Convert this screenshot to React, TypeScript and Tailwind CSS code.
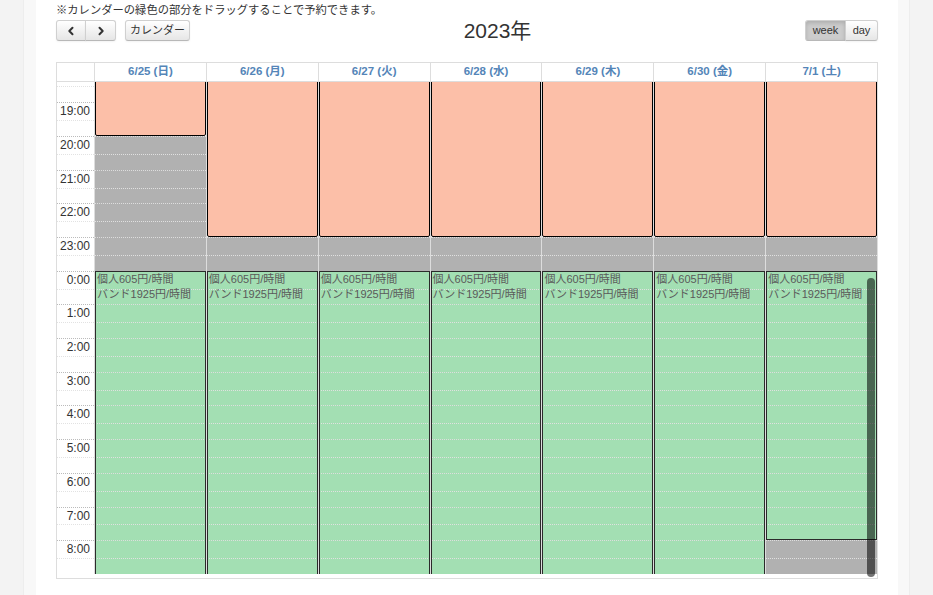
import React from "react";

const H = 33.7;
const HOURS = [18, 19, 20, 21, 22, 23, 0, 1, 2, 3, 4, 5, 6, 7, 8];
const DAYS = ["6/25 (日)", "6/26 (月)", "6/27 (火)", "6/28 (水)", "6/29 (木)", "6/30 (金)", "7/1 (土)"];

type Col = { peachEnd: number; gray: [number, number][]; greenEnd: number; greenBottom: boolean };

const COLS: Col[] = DAYS.map((_, i) => {
  if (i === 0) return { peachEnd: 2, gray: [[2, 6]], greenEnd: 16, greenBottom: false };
  if (i === 6) return { peachEnd: 5, gray: [[5, 6], [14, 16]], greenEnd: 14, greenBottom: true };
  return { peachEnd: 5, gray: [[5, 6]], greenEnd: 16, greenBottom: false };
});

const FONT = { fontFamily: '"Liberation Sans", Arial, "Noto Sans CJK JP", sans-serif' };

function Slats({ labels }: { labels?: boolean }) {
  return (
    <div className="relative z-10 flex flex-col">
      {HOURS.map((h, i) => (
        <div
          key={h}
          className={
            labels
              ? "flex h-[33.7px] flex-col border-t border-dotted border-[#bbb]"
              : "flex h-[33.7px] flex-col border-t border-dotted border-[#ddd]"
          }
        >
          <div className="h-[16.85px] pr-[4px] pt-[1px] text-right text-[12px] leading-[15px] text-[#333]">
            {labels && i > 0 ? `${h}:00` : ""}
          </div>
          <div
            className={
              labels
                ? "flex-1 border-t border-dotted border-[#e2e2e2]"
                : "flex-1 border-t border-dotted border-[#e0e0e0]"
            }
          />
        </div>
      ))}
    </div>
  );
}

function DayCol({ col }: { col: Col }) {
  const greenTop = 6 * H;
  const greenH = (col.greenEnd - 6) * H;
  return (
    <div className="relative flex-1 basis-0 border-l border-[#ddd]">
      {col.gray.map(([a, b], k) => (
        <div
          key={k}
          className="absolute inset-x-0 z-0 bg-[#b1b1b1]"
          style={{ top: a * H, height: (b - a) * H }}
        />
      ))}
      <div className="absolute inset-x-0 z-0 bg-[#a3dfb3]" style={{ top: greenTop, height: greenH }} />
      <Slats />
      <div
        className={
          col.greenBottom
            ? "absolute inset-x-0 z-20 border border-[#2b2b2b] pl-[1px] text-[11px] leading-[15px] text-[#5a5a5a]"
            : "absolute inset-x-0 z-20 border border-b-0 border-[#2b2b2b] pl-[1px] text-[11px] leading-[15px] text-[#5a5a5a]"
        }
        style={{ top: greenTop, height: greenH }}
      >
        <div>個人605円/時間</div>
        <div>バンド1925円/時間</div>
      </div>
      <div
        className="absolute inset-x-0 z-20 rounded-b-[2px] border border-black bg-[#fcbfa8]"
        style={{ top: -4, height: col.peachEnd * H + 4 }}
      />
    </div>
  );
}

function Btn({ children, className = "" }: { children: React.ReactNode; className?: string }) {
  return (
    <button
      className={
        "flex h-[21px] items-center justify-center border border-[#d0d0d0] border-b-[#b8b8b8] bg-gradient-to-b from-white to-[#e6e6e6] text-[11px] text-[#333] shadow-[0_1px_2px_rgba(0,0,0,0.05)] " +
        className
      }
    >
      {children}
    </button>
  );
}

function Chevron({ dir }: { dir: "l" | "r" }) {
  return (
    <svg width="10" height="10" viewBox="0 0 10 10" fill="none" stroke="#333" strokeWidth="2" strokeLinecap="round" strokeLinejoin="round">
      {dir === "l" ? <path d="M6.5 1.8 3.3 5l3.2 3.2" /> : <path d="M3.5 1.8 6.7 5 3.5 8.2" />}
    </svg>
  );
}

export default function App() {
  return (
    <div className="flex h-[595px] w-[933px] overflow-hidden bg-[#f3f3f3] px-[23px]" style={FONT}>
      <div className="flex h-full flex-1 border-x border-[#ededed] bg-[#f8f8f8] pl-[12px] pr-[11px]">
        <div className="h-full flex-1 bg-white px-[20px] pt-[3px]">
          <div className="h-[15px] text-[11.3px] leading-[15px] text-[#333]">
            ※カレンダーの緑色の部分をドラッグすることで予約できます。
          </div>
          <div className="mt-[2px] flex h-[21px] items-center">
            <div className="flex">
              <Btn className="w-[30px] rounded-l-[3px]">
                <Chevron dir="l" />
              </Btn>
              <Btn className="-ml-px w-[31px] rounded-r-[3px]">
                <Chevron dir="r" />
              </Btn>
              <Btn className="ml-[9px] w-[65px] rounded-[3px]">カレンダー</Btn>
            </div>
            <div className="flex-1 text-center text-[21px] leading-none text-[#333]">2023年</div>
            <div className="flex">
              <Btn className="w-[41px] rounded-l-[3px] !bg-none bg-[#cccccc] shadow-[inset_0_2px_4px_rgba(0,0,0,0.15)]">week</Btn>
              <Btn className="-ml-px w-[33px] rounded-r-[3px]">day</Btn>
            </div>
          </div>
          <div className="mt-[21px] border border-[#ddd]">
            <div className="flex h-[19px] border-b border-[#ddd]">
              <div className="w-[37px]" />
              {DAYS.map((d) => (
                <div
                  key={d}
                  className="flex flex-1 basis-0 items-center justify-center border-l border-[#ddd] text-[11.5px] font-bold text-[#5485b8]"
                >
                  {d}
                </div>
              ))}
            </div>
            <div className="relative h-[496px] overflow-hidden">
              <div className="mt-[-13.4px] flex h-[505.5px] overflow-hidden">
                <div className="w-[37px]">
                  <Slats labels />
                </div>
                {COLS.map((c, i) => (
                  <DayCol key={i} col={c} />
                ))}
              </div>
              <div className="absolute right-[2px] top-[196px] z-30 h-[299px] w-[8px] rounded-full bg-black/55" />
            </div>
          </div>
        </div>
      </div>
    </div>
  );
}
